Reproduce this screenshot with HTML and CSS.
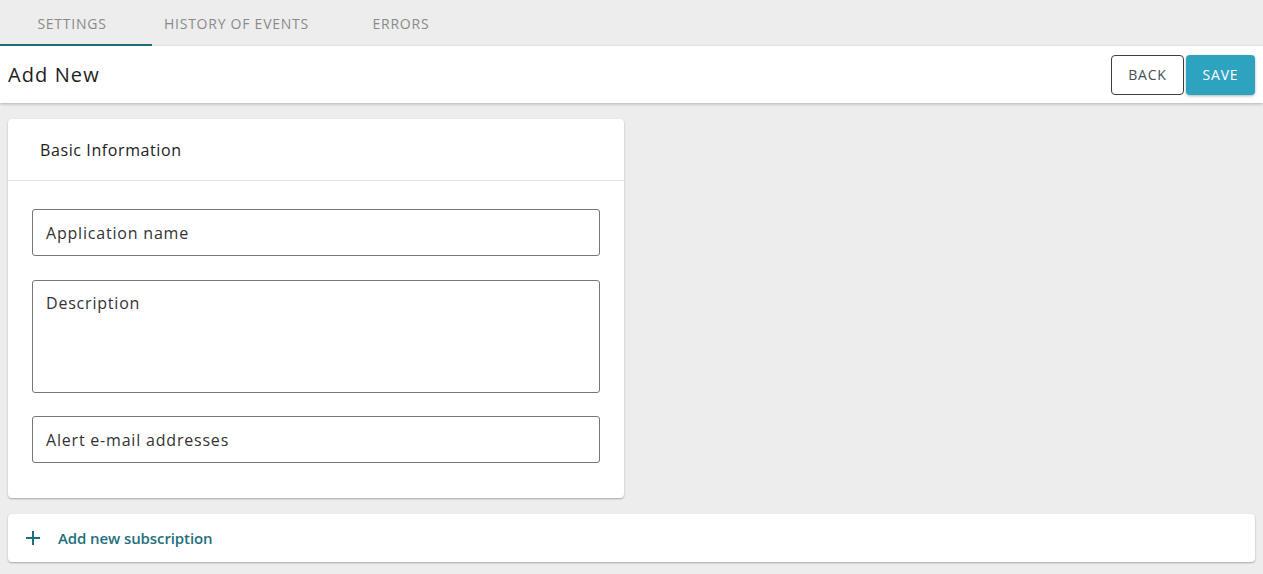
FILE: index.html
```html
<!DOCTYPE html>
<html lang="en">
<head>
<meta charset="utf-8">
<title>Add New</title>
<link rel="stylesheet" href="styles.css">
</head>
<body>
<nav class="tabs">
  <a class="tab active">SETTINGS</a>
  <a class="tab">HISTORY OF EVENTS</a>
  <a class="tab">ERRORS</a>
</nav>
<header class="toolbar">
  <h1 class="title">Add New</h1>
  <div class="actions">
    <button class="btn btn-outline">BACK</button>
    <button class="btn btn-primary">SAVE</button>
  </div>
</header>
<main class="content">
  <section class="card">
    <div class="card-head">Basic Information</div>
    <div class="card-body">
      <div class="field">Application name</div>
      <div class="field field-area">Description</div>
      <div class="field">Alert e-mail addresses</div>
    </div>
  </section>
  <section class="add-bar">
    <svg class="plus" width="16" height="16" viewBox="0 0 16 16"><path d="M8 1v14M1 8h14" stroke="currentColor" stroke-width="2" fill="none"/></svg>
    <span>Add new subscription</span>
  </section>
</main>
</body>
</html>
```
FILE: styles.css
```css
* { box-sizing: border-box; }
body {
  margin: 0;
  background: #ededed;
  font-family: "Open Sans", "DejaVu Sans", sans-serif;
  color: #222;
}
.tabs {
  display: flex;
  height: 46px;
  background: #ededed;
}
.tab {
  min-width: 152px;
  padding: 2px 20px 0 12px;
  display: flex;
  align-items: center;
  justify-content: center;
  font-size: 14px;
  letter-spacing: 0.75px;
  color: #8a8a8a;
  border-bottom: 2px solid transparent;
}
.tab.active { border-bottom-color: #1f6f7c; }
.toolbar {
  height: 57px;
  background: #fff;
  display: flex;
  align-items: center;
  justify-content: space-between;
  padding: 0 8px;
  box-shadow: 0 1px 3px rgba(0,0,0,0.25);
  position: relative;
}
.title {
  margin: 0;
  font-size: 20px;
  font-weight: 500;
  letter-spacing: 1.1px;
  color: #1e1e1e;
}
.actions { display: flex; gap: 2px; }
.btn {
  height: 40px;
  border-radius: 4px;
  font-family: inherit;
  font-size: 14px;
  letter-spacing: 0.8px;
  padding: 0;
}
.btn-outline {
  width: 73px;
  background: #fff;
  border: 1px solid #3a3f44;
  color: #4a4f54;
}
.btn-primary {
  width: 69px;
  background: #2ea3c0;
  border: none;
  color: #fff;
  box-shadow: 0 1px 3px rgba(0,0,0,0.3);
}
.content {
  padding: 16px 8px;
  display: flex;
  flex-direction: column;
  gap: 16px;
  align-items: flex-start;
}
.card {
  width: 616px;
  background: #fff;
  border-radius: 4px;
  box-shadow: 0 1px 2px rgba(0,0,0,0.3);
}
.card-head {
  height: 62px;
  padding: 0 32px;
  display: flex;
  align-items: center;
  font-size: 16px;
  font-weight: 500;
  letter-spacing: 0.6px;
  color: #222;
  border-bottom: 1px solid #e3e3e3;
}
.card-body {
  padding: 28px 24px 35px;
  display: flex;
  flex-direction: column;
  gap: 23.5px;
}
.field {
  height: 47px;
  border: 1px solid #777;
  border-radius: 3px;
  padding: 0 13px;
  display: flex;
  align-items: center;
  font-size: 16px;
  letter-spacing: 0.8px;
  color: #333;
}
.field-area {
  height: 113px;
  align-items: flex-start;
  padding-top: 11px;
}
.add-bar {
  align-self: stretch;
  height: 48px;
  background: #fff;
  border-radius: 4px;
  box-shadow: 0 1px 2px rgba(0,0,0,0.3);
  display: flex;
  align-items: center;
  padding: 0 17px;
  gap: 17px;
  color: #1f6f7c;
  font-size: 15px;
  font-weight: 600;
  letter-spacing: -0.1px;
}
.plus { flex: none; }
```
